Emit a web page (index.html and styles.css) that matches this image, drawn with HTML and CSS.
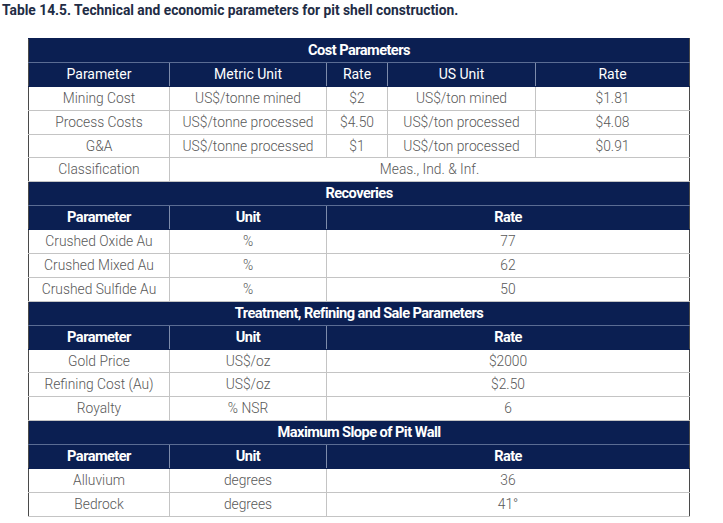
FILE: index.html
```html
<!DOCTYPE html>
<html>
<head>
<meta charset="utf-8">
<link rel="stylesheet" href="styles.css">
</head>
<body>
<div class="caption">Table 14.5. Technical and economic parameters for pit shell construction.</div>
<table class="params">
<colgroup>
<col class="c1"><col class="c2"><col class="c3"><col class="c4"><col class="c5">
</colgroup>
<tbody>
<tr class="section"><td colspan="5">Cost Parameters</td></tr>
<tr class="head light"><td>Parameter</td><td>Metric Unit</td><td>Rate</td><td>US Unit</td><td>Rate</td></tr>
<tr><td>Mining Cost</td><td>US$/tonne mined</td><td>$2</td><td>US$/ton mined</td><td>$1.81</td></tr>
<tr><td>Process Costs</td><td>US$/tonne processed</td><td>$4.50</td><td>US$/ton processed</td><td>$4.08</td></tr>
<tr><td>G&amp;A</td><td>US$/tonne processed</td><td>$1</td><td>US$/ton processed</td><td>$0.91</td></tr>
<tr><td>Classification</td><td colspan="4">Meas., Ind. &amp; Inf.</td></tr>

<tr class="section"><td colspan="5">Recoveries</td></tr>
<tr class="head"><td>Parameter</td><td>Unit</td><td colspan="3">Rate</td></tr>
<tr><td>Crushed Oxide Au</td><td>%</td><td colspan="3">77</td></tr>
<tr><td>Crushed Mixed Au</td><td>%</td><td colspan="3">62</td></tr>
<tr><td>Crushed Sulfide Au</td><td>%</td><td colspan="3">50</td></tr>

<tr class="section"><td colspan="5">Treatment, Refining and Sale Parameters</td></tr>
<tr class="head"><td>Parameter</td><td>Unit</td><td colspan="3">Rate</td></tr>
<tr><td>Gold Price</td><td>US$/oz</td><td colspan="3">$2000</td></tr>
<tr><td>Refining Cost (Au)</td><td>US$/oz</td><td colspan="3">$2.50</td></tr>
<tr><td>Royalty</td><td>% NSR</td><td colspan="3">6</td></tr>

<tr class="section"><td colspan="5">Maximum Slope of Pit Wall</td></tr>
<tr class="head"><td>Parameter</td><td>Unit</td><td colspan="3">Rate</td></tr>
<tr><td>Alluvium</td><td>degrees</td><td colspan="3">36</td></tr>
<tr><td>Bedrock</td><td>degrees</td><td colspan="3">41°</td></tr>
</tbody>
</table>
</body>
</html>
```
FILE: styles.css
```css
html, body {
  margin: 0;
  padding: 0;
  background: #ffffff;
}
body {
  font-family: Roboto, "Liberation Sans", sans-serif;
}
.caption {
  font-size: 13.8px;
  font-weight: 700;
  color: #222c45;
  padding: 2px 0 0 2px;
  height: 38px;
  box-sizing: border-box;
}
.params {
  margin-left: 28px;
  border-collapse: collapse;
  table-layout: fixed;
  width: 661px;
  border: 1px solid #4a4a4a;
  font-size: 13.8px;
}
.c1 { width: 141px; }
.c2 { width: 157px; }
.c3 { width: 61px; }
.c4 { width: 148px; }
.c5 { width: 154px; }
.params tr {
  height: 23.9px;
}
.params td {
  padding: 0;
  text-align: center;
  vertical-align: middle;
  border: 1px solid #c4c4c4;
  color: #585858;
  font-weight: 300;
  line-height: 21px;
  white-space: nowrap;
  overflow: hidden;
}
.params tr.section td {
  background: #0b1f52;
  color: #ffffff;
  font-weight: 700;
  font-size: 14.6px;
  letter-spacing: -0.55px;
  border-color: #0b1f52;
  border-bottom: 1px solid #5b6c93;
  border-left: 1px solid #4a4a4a;
  border-right: 1px solid #4a4a4a;
}
.params tr.head td {
  background: #0b1f52;
  color: #ffffff;
  font-weight: 700;
  font-size: 14.6px;
  letter-spacing: -0.55px;
  border-top: 1px solid #5b6c93;
  border-bottom: 1px solid #0b1f52;
  border-left: 1px solid #7d8bab;
  border-right: 1px solid #7d8bab;
}
.params tr.head.light td {
  font-weight: 400;
  font-size: 14px;
  letter-spacing: 0;
}
.params tr.head td:first-child {
  border-left: 1px solid #4a4a4a;
}
.params tr.head td:last-child {
  border-right: 1px solid #4a4a4a;
}
.params tr td:first-child {
  border-left-color: #4a4a4a;
}
.params tr td:last-child {
  border-right-color: #4a4a4a;
}
```
